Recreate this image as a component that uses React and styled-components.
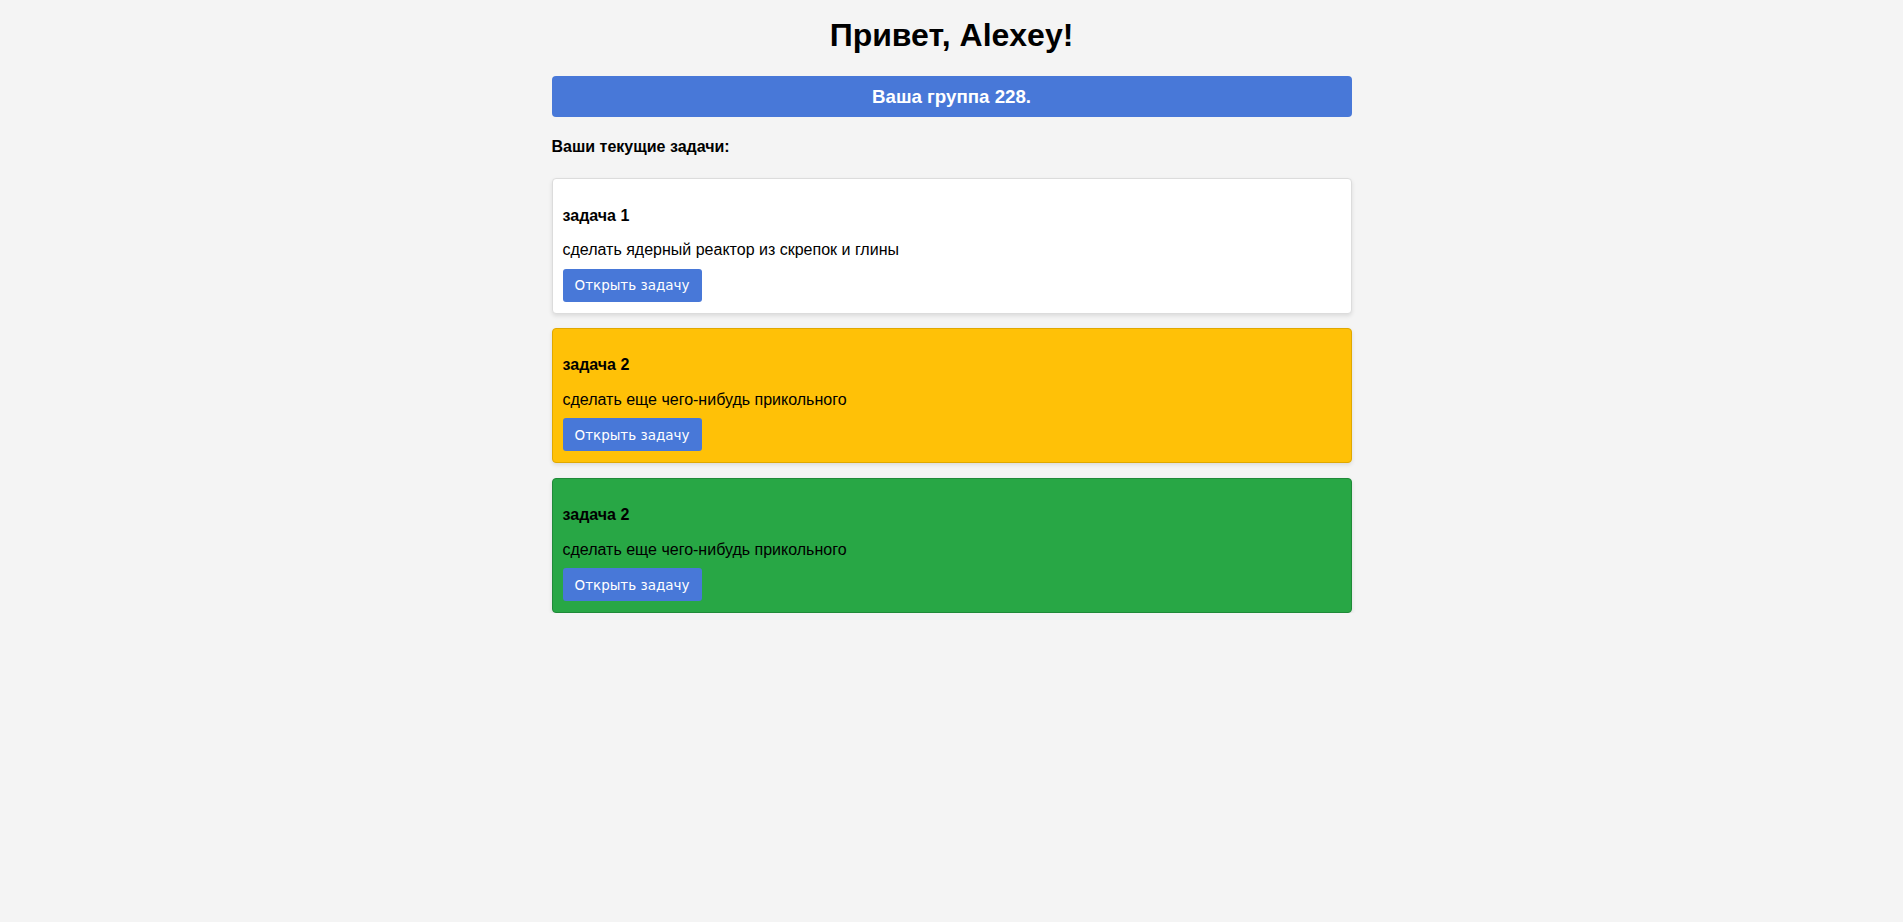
import React from "react";
import styled, { createGlobalStyle } from "styled-components";

const GlobalStyle = createGlobalStyle`
  html, body {
    margin: 0;
    padding: 0;
    background: #f4f4f4;
    font-family: "Liberation Sans", Arial, sans-serif;
    color: #000;
  }
`;

const Page = styled.div`
  max-width: 800px;
  margin: 0 auto;
  padding-top: 17px;
`;

const Title = styled.h1`
  margin: 0 0 22px;
  font-size: 32px;
  font-weight: bold;
  text-align: center;
`;

const GroupBanner = styled.div`
  background: #4878d8;
  color: #fff;
  border-radius: 4px;
  padding: 9.5px 10px;
  text-align: center;
  font-size: 18.72px;
  font-weight: bold;
`;

const SectionLabel = styled.h4`
  margin: 21px 0 22.2px;
  font-size: 16px;
  font-weight: bold;
`;

const TaskList = styled.div`
  display: flex;
  flex-direction: column;
  gap: 14.3px;
`;

const palette = {
  white: { bg: "#ffffff", border: "#dcdcdc" },
  yellow: { bg: "#ffc107", border: "#e0a800" },
  green: { bg: "#28a745", border: "#1f8a38" },
};

const TaskCard = styled.div`
  background: ${(p) => palette[p.$tone].bg};
  border: 1px solid ${(p) => palette[p.$tone].border};
  border-radius: 4px;
  padding: 10px 10px 11px;
  box-shadow: 0 2px 4px rgba(0, 0, 0, 0.1);
`;

const TaskTitle = styled.h4`
  margin: 17.5px 0 16.5px;
  font-size: 16px;
  font-weight: bold;
`;

const TaskText = styled.p`
  margin: 0 0 9.5px;
  font-size: 16px;
`;

const OpenButton = styled.button`
  display: block;
  height: 33px;
  padding: 0 12px;
  border: none;
  border-radius: 3px;
  background: #4878d8;
  color: #fff;
  font-family: "DejaVu Sans", sans-serif;
  font-size: 13.5px;
  cursor: pointer;
`;

const tasks = [
  { title: "задача 1", text: "сделать ядерный реактор из скрепок и глины", tone: "white" },
  { title: "задача 2", text: "сделать еще чего-нибудь прикольного", tone: "yellow" },
  { title: "задача 2", text: "сделать еще чего-нибудь прикольного", tone: "green" },
];

export default function App() {
  return (
    <>
      <GlobalStyle />
      <Page>
        <Title>Привет, Alexey!</Title>
        <GroupBanner>Ваша группа 228.</GroupBanner>
        <SectionLabel>Ваши текущие задачи:</SectionLabel>
        <TaskList>
          {tasks.map((t, i) => (
            <TaskCard key={i} $tone={t.tone}>
              <TaskTitle>{t.title}</TaskTitle>
              <TaskText>{t.text}</TaskText>
              <OpenButton>Открыть задачу</OpenButton>
            </TaskCard>
          ))}
        </TaskList>
      </Page>
    </>
  );
}
